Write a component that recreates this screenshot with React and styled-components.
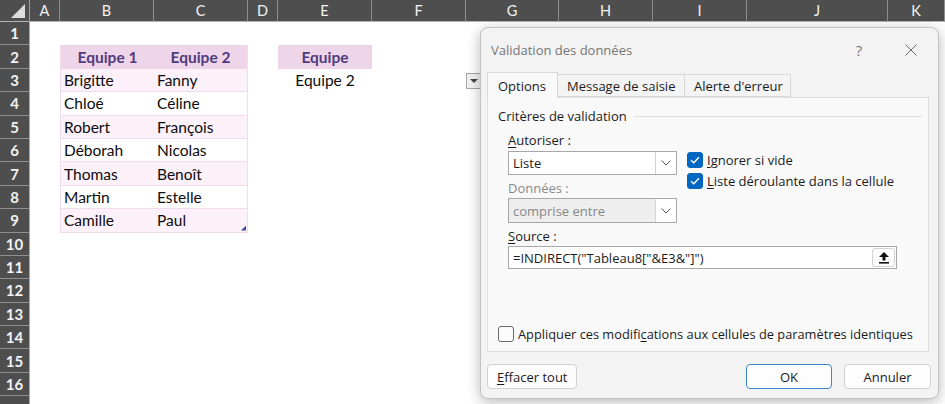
import React from 'react';
import styled, { createGlobalStyle, css } from 'styled-components';

const GlobalStyle = createGlobalStyle`
  *, *::before, *::after { box-sizing: border-box; }
  html, body { margin: 0; padding: 0; background: #ffffff; overflow: hidden; }
  body { width: 945px; height: 404px; }
`;

const COLUMNS = [
  { key: 'A', w: 30 },
  { key: 'B', w: 94 },
  { key: 'C', w: 94 },
  { key: 'D', w: 30 },
  { key: 'E', w: 94 },
  { key: 'F', w: 94 },
  { key: 'G', w: 93 },
  { key: 'H', w: 94 },
  { key: 'I', w: 94 },
  { key: 'J', w: 141 },
  { key: 'K', w: 57 },
];

const TEAM1 = ['Brigitte', 'Chloé', 'Robert', 'Déborah', 'Thomas', 'Martin', 'Camille'];
const TEAM2 = ['Fanny', 'Céline', 'François', 'Nicolas', 'Benoît', 'Estelle', 'Paul'];

function cellFor(row, col) {
  if (row === 2 && col === 'B') return { text: 'Equipe 1', kind: 'head', align: 'center', left: true };
  if (row === 2 && col === 'C') return { text: 'Equipe 2', kind: 'head', align: 'center', right: true };
  if (row === 2 && col === 'E') return { text: 'Equipe', kind: 'head', align: 'center' };
  if (row === 3 && col === 'E') return { text: 'Equipe 2', align: 'center' };
  if (row >= 3 && row <= 9 && (col === 'B' || col === 'C')) {
    const i = row - 3;
    return {
      text: col === 'B' ? TEAM1[i] : TEAM2[i],
      kind: i % 2 === 0 ? 'band' : 'plain',
      left: col === 'B',
      right: col === 'C',
      handle: row === 9 && col === 'C',
    };
  }
  return { text: '' };
}

const Workbook = styled.div`
  position: relative;
  width: 945px;
  height: 404px;
  overflow: hidden;
  font-family: Lato, "Liberation Sans", sans-serif;
`;

const Sheet = styled.div`
  display: grid;
  grid-template-columns: 30px ${COLUMNS.map((c) => `${c.w}px`).join(' ')};
  grid-template-rows: 22px repeat(17, 23.4px);
`;

const HeaderBase = css`
  background: #4e4e4e;
  color: #f2f2f2;
  display: flex;
  align-items: center;
  justify-content: center;
  font-size: 14.5px;
`;

const Corner = styled.div`
  ${HeaderBase};
  position: relative;
  border-right: 1px solid #9c9c9c;
  border-bottom: 1px solid #b4b4b4;
  &::after {
    content: '';
    position: absolute;
    right: 4px;
    bottom: 3px;
    width: 14px;
    height: 14px;
    background: #dcdcdc;
    clip-path: polygon(100% 0, 100% 100%, 0 100%);
  }
`;

const ColHead = styled.div`
  ${HeaderBase};
  border-right: 1px solid #8e8e8e;
  border-bottom: 1px solid #b4b4b4;
`;

const RowHead = styled.div`
  ${HeaderBase};
  font-weight: 700;
  font-size: 15px;
  border-right: 1px solid #a8a8a8;
  border-bottom: 1px solid #8f8f8f;
`;

const TABLE_LINE = '#f3dbee';

const kinds = {
  head: css`
    background: #efd5ea;
    color: #4f3c7e;
    font-weight: 700;
  `,
  band: css`
    background: #fcf1f9;
    border-bottom: 1px solid ${TABLE_LINE};
  `,
  plain: css`
    background: #ffffff;
    border-bottom: 1px solid ${TABLE_LINE};
  `,
};

const Cell = styled.div`
  position: relative;
  display: flex;
  align-items: center;
  justify-content: ${({ $align }) => ($align === 'center' ? 'center' : 'flex-start')};
  padding: 0 3px;
  font-size: 15.5px;
  color: #0c0c0c;
  white-space: nowrap;
  ${({ $kind }) => kinds[$kind] || ''}
  ${({ $left }) => $left && css`border-left: 1px solid ${TABLE_LINE};`}
  ${({ $right }) => $right && css`border-right: 1px solid ${TABLE_LINE};`}
`;

const ResizeHandle = styled.span`
  position: absolute;
  right: 1px;
  bottom: 1px;
  width: 5px;
  height: 5px;
  background: #3b4fa8;
  clip-path: polygon(100% 0, 100% 100%, 0 100%);
`;

const DropArrow = styled.div`
  position: absolute;
  left: 466px;
  top: 73px;
  width: 17px;
  height: 16px;
  background: #f2f2f2;
  border: 1px solid #a6a6a6;
  display: flex;
  align-items: center;
  justify-content: center;
  &::after {
    content: '';
    border-left: 4px solid transparent;
    border-right: 4px solid transparent;
    border-top: 4px solid #444;
    margin-left: -2px;
  }
`;

/* ---------- Dialog ---------- */

const Dialog = styled.div`
  position: absolute;
  left: 480px;
  top: 27px;
  width: 459px;
  height: 372px;
  background: #f3f3f3;
  border: 1px solid #c2c2c2;
  border-radius: 8px;
  box-shadow: 0 3px 14px rgba(0, 0, 0, 0.28);
  display: flex;
  flex-direction: column;
  font-family: "Segoe UI", "Open Sans", "Noto Sans", sans-serif;
  font-size: 12.5px;
  color: #1b1b1b;
`;

const TitleBar = styled.div`
  height: 44px;
  display: flex;
  align-items: center;
  padding-left: 10px;
`;

const Title = styled.div`
  font-size: 13px;
  color: #767676;
  flex: 1;
`;

const TitleButton = styled.div`
  width: 44px;
  height: 30px;
  display: flex;
  align-items: center;
  justify-content: center;
  color: #7a7a7a;
  font-size: 15px;
  margin-right: ${({ $mr }) => $mr || 0}px;
`;

const TabRow = styled.div`
  height: 25px;
  display: flex;
  align-items: flex-end;
  margin-left: 6px;
  position: relative;
  z-index: 1;
`;

const Tab = styled.div`
  height: ${({ $active }) => ($active ? 26 : 23)}px;
  width: ${({ $w }) => $w}px;
  padding-left: ${({ $active }) => ($active ? 10 : 9)}px;
  display: flex;
  align-items: center;
  border: 1px solid #d9d9d9;
  border-bottom: ${({ $active }) => ($active ? 'none' : '1px solid #d9d9d9')};
  margin-left: -1px;
  margin-bottom: ${({ $active }) => ($active ? -1 : 0)}px;
  background: ${({ $active }) => ($active ? '#f9f9f9' : '#f4f4f4')};
  font-size: 13px;
  color: #1b1b1b;
  white-space: nowrap;
  &:first-child { margin-left: 0; }
`;

const Panel = styled.div`
  height: 255px;
  margin: 0 9px 0 6px;
  border: 1px solid #dedede;
  background: #f9f9f9;
  display: flex;
  flex-direction: column;
  padding: 9px 6px 9px 10px;
`;

const SectionHeader = styled.div`
  height: 18px;
  display: flex;
  align-items: center;
  font-size: 13px;
  &::after {
    content: '';
    flex: 1;
    height: 1px;
    background: #dcdcdc;
    margin-left: 7px;
  }
`;

const Fields = styled.div`
  padding-left: 10px;
  display: flex;
  flex-direction: column;
`;

const FieldsRow = styled.div`
  display: flex;
  align-items: flex-start;
  gap: 10px;
`;

const Column = styled.div`
  display: flex;
  flex-direction: column;
  padding-top: ${({ $pt }) => $pt || 0}px;
  gap: ${({ $gap }) => $gap || 0}px;
`;

const Label = styled.div`
  height: 16px;
  line-height: 16px;
  margin-top: ${({ $mt }) => $mt}px;
  margin-bottom: ${({ $mb }) => $mb}px;
  font-size: 13px;
  color: ${({ $disabled }) => ($disabled ? '#8a8a8a' : '#1b1b1b')};
  white-space: nowrap;
`;

const Key = styled.span`
  text-decoration: underline;
  text-underline-offset: 2px;
`;

const Combo = styled.div`
  width: 169px;
  height: ${({ $h }) => $h}px;
  display: flex;
  border: 1px solid #a8a8a8;
  background: ${({ $disabled }) => ($disabled ? '#eeeeee' : '#ffffff')};
`;

const ComboValue = styled.div`
  flex: 1;
  display: flex;
  align-items: center;
  padding-left: 4px;
  font-size: 13px;
  color: ${({ $disabled }) => ($disabled ? '#888888' : '#1b1b1b')};
`;

const ComboButton = styled.div`
  width: 21px;
  display: flex;
  align-items: center;
  justify-content: center;
  background: #ffffff;
  border-left: 1px solid #d4d4d4;
`;

const CheckRow = styled.label`
  display: flex;
  align-items: center;
  gap: 4px;
  height: 16px;
  font-size: ${({ $fs }) => $fs || 13}px;
  white-space: nowrap;
`;

const CheckBox = styled.span`
  width: 16px;
  height: 16px;
  flex: none;
  border-radius: 3px;
  display: inline-flex;
  align-items: center;
  justify-content: center;
  background: ${({ $checked }) => ($checked ? '#0067c0' : '#fcfcfc')};
  border: 1px solid ${({ $checked }) => ($checked ? '#0067c0' : '#6a6a6a')};
`;

const SourceBox = styled.div`
  width: 389px;
  height: 23px;
  display: flex;
  align-items: center;
  border: 1px solid #a8a8a8;
  background: #ffffff;
  padding: 0 1px 0 4px;
`;

const SourceText = styled.div`
  flex: 1;
  font-size: 13px;
  white-space: nowrap;
`;

const RefButton = styled.div`
  width: 23px;
  height: 19px;
  display: flex;
  align-items: center;
  justify-content: center;
  background: #fdfdfd;
  border: 1px solid #d2d2d2;
  border-radius: 3px;
`;

const BottomCheck = styled(CheckRow)`
  margin-top: auto;
`;

const Footer = styled.div`
  display: flex;
  align-items: center;
  gap: 12px;
  padding: 12px 7px 0 6px;
`;

const Button = styled.div`
  height: 25px;
  width: ${({ $w }) => $w}px;
  display: flex;
  align-items: center;
  justify-content: ${({ $left }) => ($left ? 'flex-start' : 'center')};
  padding-left: ${({ $left }) => ($left ? 9 : 0)}px;
  background: #fdfdfd;
  border: ${({ $primary }) => ($primary ? '1.5px solid #3c87d1' : '1px solid #d0d0d0')};
  border-radius: 4px;
  font-size: 13px;
  color: #1b1b1b;
  margin-left: ${({ $push }) => ($push ? 'auto' : 0)};
`;

const Chevron = () => (
  <svg width="10" height="6" viewBox="0 0 10 6">
    <polyline points="0.5,0.5 5,5 9.5,0.5" fill="none" stroke="#555" strokeWidth="1" />
  </svg>
);

const Tick = () => (
  <svg width="10" height="8" viewBox="0 0 10 8">
    <polyline points="1,4.2 3.7,6.8 9,1.2" fill="none" stroke="#ffffff" strokeWidth="1.3" />
  </svg>
);

const CloseIcon = () => (
  <svg width="12" height="12" viewBox="0 0 12 12">
    <path d="M0.5 0.5 L11.5 11.5 M11.5 0.5 L0.5 11.5" stroke="#6b6b6b" strokeWidth="1" />
  </svg>
);

const CollapseIcon = () => (
  <svg width="10" height="12" viewBox="0 0 10 12">
    <polygon points="5,0 10,5 6.5,5 6.5,8.5 3.5,8.5 3.5,5 0,5" fill="#111" />
    <rect x="0" y="10" width="10" height="1.6" fill="#111" />
  </svg>
);

function ValidationDialog() {
  return (
    <Dialog>
      <TitleBar>
        <Title>Validation des données</Title>
        <TitleButton $mr={8}>?</TitleButton>
        <TitleButton $mr={5}>
          <CloseIcon />
        </TitleButton>
      </TitleBar>
      <TabRow>
        <Tab $active $w={71}>Options</Tab>
        <Tab $w={128}>Message de saisie</Tab>
        <Tab $w={107}>Alerte d'erreur</Tab>
      </TabRow>
      <Panel>
        <SectionHeader>Critères de validation</SectionHeader>
        <Fields>
          <FieldsRow>
            <Column>
              <Label $mt={7} $mb={3}>
                <Key>A</Key>utoriser :
              </Label>
              <Combo $h={24}>
                <ComboValue>Liste</ComboValue>
                <ComboButton>
                  <Chevron />
                </ComboButton>
              </Combo>
              <Label $mt={5} $mb={2} $disabled>
                Données :
              </Label>
              <Combo $h={25} $disabled>
                <ComboValue $disabled>comprise entre</ComboValue>
                <ComboButton>
                  <Chevron />
                </ComboButton>
              </Combo>
            </Column>
            <Column $pt={27} $gap={5}>
              <CheckRow>
                <CheckBox $checked>
                  <Tick />
                </CheckBox>
                <span>
                  <Key>I</Key>gnorer si vide
                </span>
              </CheckRow>
              <CheckRow>
                <CheckBox $checked>
                  <Tick />
                </CheckBox>
                <span>
                  <Key>L</Key>iste déroulante dans la cellule
                </span>
              </CheckRow>
            </Column>
          </FieldsRow>
          <Label $mt={5} $mb={2}>
            <Key>S</Key>ource :
          </Label>
          <SourceBox>
            <SourceText>=INDIRECT("Tableau8["&amp;E3&amp;"]")</SourceText>
            <RefButton>
              <CollapseIcon />
            </RefButton>
          </SourceBox>
        </Fields>
        <BottomCheck $fs={12.8}>
          <CheckBox />
          <span>
            Appliquer ces modifi<Key>c</Key>ations aux cellules de paramètres identiques
          </span>
        </BottomCheck>
      </Panel>
      <Footer>
        <Button $w={90} $left>
          <span>
            <Key>E</Key>ffacer tout
          </span>
        </Button>
        <Button $w={86} $primary $push>
          OK
        </Button>
        <Button $w={87}>Annuler</Button>
      </Footer>
    </Dialog>
  );
}

export default function App() {
  const rows = Array.from({ length: 17 }, (_, i) => i + 1);
  return (
    <>
      <GlobalStyle />
      <Workbook>
        <Sheet>
          <Corner />
          {COLUMNS.map((c) => (
            <ColHead key={c.key}>{c.key}</ColHead>
          ))}
          {rows.map((r) => (
            <React.Fragment key={r}>
              <RowHead>{r < 17 ? r : ''}</RowHead>
              {COLUMNS.map((c) => {
                const d = cellFor(r, c.key);
                return (
                  <Cell
                    key={c.key}
                    $kind={d.kind}
                    $align={d.align}
                    $left={d.left}
                    $right={d.right}
                  >
                    {d.text}
                    {d.handle && <ResizeHandle />}
                  </Cell>
                );
              })}
            </React.Fragment>
          ))}
        </Sheet>
        <DropArrow />
        <ValidationDialog />
      </Workbook>
    </>
  );
}
